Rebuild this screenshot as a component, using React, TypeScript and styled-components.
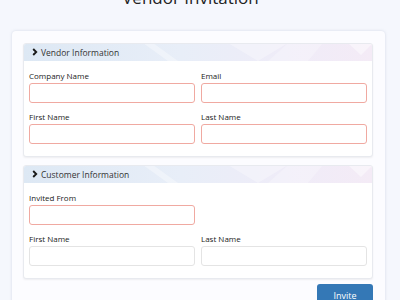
import React from "react";
import styled, { createGlobalStyle } from "styled-components";

const Global = createGlobalStyle`
  html, body { margin: 0; padding: 0; background: #f5f7fd; }
  body { font-family: "Open Sans", "Noto Sans", sans-serif; color: #333; overflow: hidden; }
  * { box-sizing: border-box; }
`;

const Page = styled.div`
  width: 400px;
  height: 300px;
  overflow: hidden;
  background: #f5f7fd;
`;

const Title = styled.h1`
  margin: -16px 0 0 0;
  padding-right: 19px;
  height: 47px;
  font-size: 17px;
  font-weight: 400;
  line-height: 28px;
  text-align: center;
  color: #222;
`;

const Card = styled.div`
  margin: 0 15px 0 12px;
  padding: 12px 12px 20px 11px;
  background: #fcfcff;
  border-radius: 4px;
  box-shadow: 0 0 3px rgba(120, 130, 160, 0.25);
  display: flex;
  flex-direction: column;
  gap: 8px;
`;

const Panel = styled.section`
  background: #fff;
  border: 1px solid #e8eaef;
  border-radius: 3px;
  box-shadow: 0 1px 2px rgba(0, 0, 0, 0.06);
  overflow: hidden;
`;

const PanelHeader = styled.div`
  position: relative;
  height: 18px;
  margin: -1px -1px 0 -1px;
  display: flex;
  align-items: center;
  padding-left: 9px;
  background: linear-gradient(90deg, #dde8f4 0%, #e8eef8 45%, #efecf8 75%, #f4ebf6 100%);
  font-size: 8.5px;
  color: #333;
  overflow: hidden;
`;

const HeaderDecor = styled.svg`
  position: absolute;
  inset: 0;
  width: 100%;
  height: 100%;
`;

const HeaderLabel = styled.span`
  position: relative;
  display: flex;
  align-items: center;
  gap: 3px;
`;

const PanelBody = styled.div`
  padding: 9px 5px 12px 5px;
  display: grid;
  grid-template-columns: 166px 166px;
  column-gap: 6px;
  row-gap: 8px;
`;

const Field = styled.div`
  display: flex;
  flex-direction: column;
  gap: 2px;
`;

const Label = styled.label`
  font-size: 8px;
  line-height: 11px;
  color: #222;
`;

const Input = styled.div<{ $error?: boolean }>`
  height: 20px;
  border: 1px solid ${(p) => (p.$error ? "#f0a9a1" : "#e4e4e4")};
  border-radius: 3px;
  background: #fff;
`;

const Footer = styled.div`
  display: flex;
  justify-content: flex-end;
  margin-top: -3px;
`;

const Button = styled.button`
  width: 56px;
  height: 22px;
  border: none;
  border-radius: 3px;
  background: #3478b6;
  color: #fff;
  font-family: "Open Sans", sans-serif;
  font-size: 9px;
  padding: 0;
`;

const Chevron = () => (
  <svg width="6" height="8" viewBox="0 0 6 8">
    <path d="M1.2 1 L4.2 4 L1.2 7" fill="none" stroke="#1a1a1a" strokeWidth="1.9" />
  </svg>
);

const Decor = () => (
  <HeaderDecor viewBox="0 0 350 18" preserveAspectRatio="none">
    <polygon points="120,0 145,18 155,18 130,0" fill="#ffffff" opacity="0.35" />
    <polygon points="205,0 235,18 265,0" fill="#ffffff" opacity="0.3" />
    <polygon points="245,18 265,0 300,0 285,18" fill="#ffffff" opacity="0.25" />
    <polygon points="325,0 338,12 350,0" fill="#ffffff" opacity="0.45" />
  </HeaderDecor>
);

type F = { label: string; error?: boolean };

const Section = ({ title, fields }: { title: string; fields: (F | null)[] }) => (
  <Panel>
    <PanelHeader>
      <Decor />
      <HeaderLabel>
        <Chevron />
        {title}
      </HeaderLabel>
    </PanelHeader>
    <PanelBody>
      {fields.map((f, i) =>
        f ? (
          <Field key={i}>
            <Label>{f.label}</Label>
            <Input $error={f.error} />
          </Field>
        ) : (
          <div key={i} />
        )
      )}
    </PanelBody>
  </Panel>
);

export default function App() {
  return (
    <Page>
      <Global />
      <Title>Vendor Invitation</Title>
      <Card>
        <Section
          title="Vendor Information"
          fields={[
            { label: "Company Name", error: true },
            { label: "Email", error: true },
            { label: "First Name", error: true },
            { label: "Last Name", error: true },
          ]}
        />
        <Section
          title="Customer Information"
          fields={[
            { label: "Invited From", error: true },
            null,
            { label: "First Name" },
            { label: "Last Name" },
          ]}
        />
        <Footer>
          <Button>Invite</Button>
        </Footer>
      </Card>
    </Page>
  );
}
